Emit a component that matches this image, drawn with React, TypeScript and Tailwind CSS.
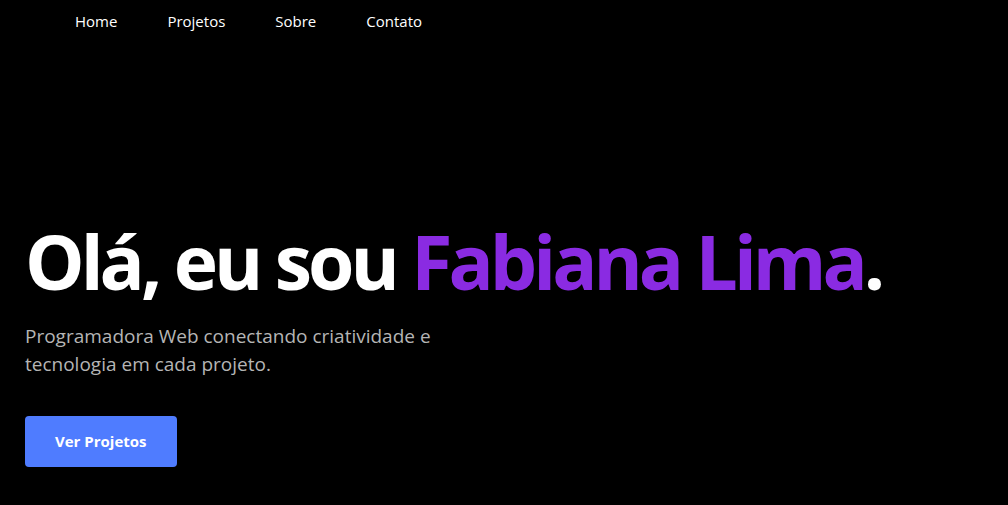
const App = () => {
  return (
    <div className="min-h-screen bg-black text-white font-['Open_Sans',sans-serif]">
      <nav className="flex h-[42px] items-center px-[50px]">
        <ul className="flex">
          <li className="px-[25px] text-[15px]">Home</li>
          <li className="px-[25px] text-[15px]">Projetos</li>
          <li className="px-[25px] text-[15px]">Sobre</li>
          <li className="px-[25px] text-[15px]">Contato</li>
        </ul>
      </nav>

      <section className="px-[25px] pt-[174px]">
        <h1 className="text-[75px] font-bold leading-[90px] tracking-[-4px]">
          Olá, eu sou <span className="text-[#8a2be2]">Fabiana Lima</span>.
        </h1>
        <p className="mt-[16px] max-w-[450px] text-[19px] leading-[28px] text-[#b5b5b5]">
          Programadora Web conectando criatividade e tecnologia em cada projeto.
        </p>
        <button className="mt-[38px] rounded-[4px] bg-[#4f7cff] px-[30px] py-[15px] text-[15px] font-bold leading-[21px] text-white">
          Ver Projetos
        </button>
      </section>
    </div>
  );
};

export default App;
